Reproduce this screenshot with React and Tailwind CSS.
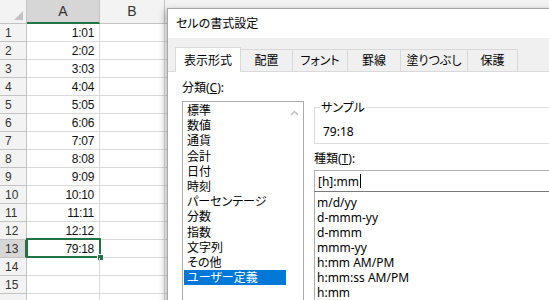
import React from "react";

const vals = ["1:01","2:02","3:03","4:04","5:05","6:06","7:07","8:08","9:09","10:10","11:11","12:12","79:18","","",""];
const cats = ["標準","数値","通貨","会計","日付","時刻","パーセンテージ","分数","指数","文字列","その他","ユーザー定義"];
const fmts = ["m/d/yy","d-mmm-yy","d-mmm","mmm-yy","h:mm AM/PM","h:mm:ss AM/PM","h:mm"];
const tabs = [
  ["表示形式", "w-[66px]"],
  ["配置", "w-[52px]"],
  ["フォント", "w-[55px]"],
  ["罫線", "w-[53px]"],
  ["塗りつぶし", "w-[67px]"],
  ["保護", "w-[50px]"],
];

function Sheet() {
  return (
    <div className="flex flex-col w-full font-['Liberation_Sans',sans-serif] text-[#222]">
      <div className="flex h-[24px] shrink-0 border-b border-[#c4c4c4] bg-[#f3f3f3]">
        <div className="relative w-[27px] shrink-0 border-r border-[#c4c4c4]">
          <svg className="absolute right-[3px] bottom-[3px]" width="9" height="9" viewBox="0 0 9 9">
            <polygon points="9,0 9,9 0,9" fill="#c3c3c3" />
          </svg>
        </div>
        <div className="w-[73px] shrink-0 border-r border-[#c4c4c4] bg-[#d6d6d6] border-b-2 border-b-[#217346] -mb-px flex items-center justify-center text-[14px] text-[#333]">A</div>
        <div className="w-[65px] shrink-0 border-r border-[#c4c4c4] flex items-center justify-center text-[14px] text-[#333]">B</div>
        <div className="flex-1" />
      </div>
      {vals.map((v, i) => {
        const sel = i === 12;
        return (
          <div key={i} className="flex h-[18px] shrink-0 border-b border-[#dadada]">
            <div className={`w-[27px] shrink-0 border-r flex items-center pl-[5px] text-[12px] text-[#333] ${sel ? "bg-[#d6d6d6] border-r-2 border-r-[#217346]" : "bg-[#f3f3f3] border-[#c4c4c4]"} border-b border-b-[#c4c4c4] -mb-px`}>
              {i < 15 ? i + 1 : ""}
            </div>
            <div className="relative w-[73px] shrink-0 border-r border-[#dadada] flex items-center justify-end pr-[5px] text-[12px] tracking-[-0.3px] text-[#111]">
              {v}
              {sel && (
                <>
                  <div className="absolute -left-[1px] -top-[2px] -right-[2px] -bottom-[1px] border-2 border-[#217346]" />
                  <div className="absolute -right-[5px] -bottom-[4px] w-[7px] h-[7px] bg-[#217346] border border-white" />
                </>
              )}
            </div>
            <div className="w-[65px] shrink-0 border-r border-[#dadada]" />
            <div className="flex-1" />
          </div>
        );
      })}
    </div>
  );
}

function Dialog() {
  return (
    <div className="absolute left-[167px] top-[8px] w-[420px] h-[320px] bg-white border border-[#a8a8a8] shadow-[-2px_2px_7px_rgba(0,0,0,0.28)] flex flex-col font-['Noto_Sans','Noto_Sans_CJK_JP',sans-serif] [font-feature-settings:'palt'] text-[12px] text-black">
      <div className="h-[29px] shrink-0 flex items-center pl-[8px] leading-[15px]">セルの書式設定</div>
      <div className="h-[34px] shrink-0 bg-[#f0f0f0] flex items-end pl-[7px] border-b border-[#d9d9d9]">
        {tabs.map(([t, w], i) =>
          i === 0 ? (
            <div key={t} className={`${w} h-[25px] -mb-px relative bg-white border-x border-t border-[#d9d9d9] flex items-center justify-center leading-[15px]`}>{t}</div>
          ) : (
            <div key={t} className={`${w} h-[22px] border-t border-r border-[#d9d9d9] flex items-center justify-center leading-[15px]`}>{t}</div>
          )
        )}
      </div>
      <div className="flex-1 flex pt-[8px] pl-[14px] gap-[10px]">
        <div className="w-[122px] shrink-0 flex flex-col">
          <div className="h-[15px] leading-[15px]">分類(<span className="underline">C</span>):</div>
          <div className="mt-[6px] flex-1 border border-[#ababab] flex">
            <div className="flex-1 flex flex-col pt-[1px] pl-[1px]">
              {cats.map((c, i) => (
                <div key={c} className={`h-[15.2px] leading-[15px] pl-[3px] whitespace-nowrap ${i === 11 ? "bg-[#0078d7] text-white" : ""}`}>{c}</div>
              ))}
            </div>
            <div className="w-[17px] shrink-0 flex justify-center pt-[8px]">
              <svg width="9" height="6" viewBox="0 0 9 6">
                <polyline points="1,5 4.5,1.5 8,5" fill="none" stroke="#bdbdbd" strokeWidth="1.3" />
              </svg>
            </div>
          </div>
        </div>
        <div className="flex-1 flex flex-col pt-[20px]">
          <fieldset className="border border-[#dcdcdc] px-[5px] pb-[4px]">
            <legend className="px-[1px] leading-[15px]">サンプル</legend>
            <div className="h-[15px] leading-[15px] mt-[9px] pl-[3px]">79:18</div>
          </fieldset>
          <div className="mt-[7px] h-[15px] leading-[15px]">種類(<span className="underline">T</span>):</div>
          <div className="mt-[4px] h-[21px] border-x border-t border-[#b4b4b4] flex items-center pl-[3px] leading-[15px]">
            [h]:mm<span className="inline-block w-px h-[14px] bg-black ml-[1px]" />
          </div>
          <div className="flex-1 border border-[#ababab] border-t-[#7a7a7a] flex flex-col pt-[3px] pl-[2px]">
            {fmts.map((f) => (
              <div key={f} className="h-[15px] leading-[15px] whitespace-nowrap">{f}</div>
            ))}
          </div>
        </div>
      </div>
    </div>
  );
}

export default function App() {
  return (
    <div className="relative w-[549px] h-[300px] overflow-hidden bg-white">
      <Sheet />
      <Dialog />
    </div>
  );
}
